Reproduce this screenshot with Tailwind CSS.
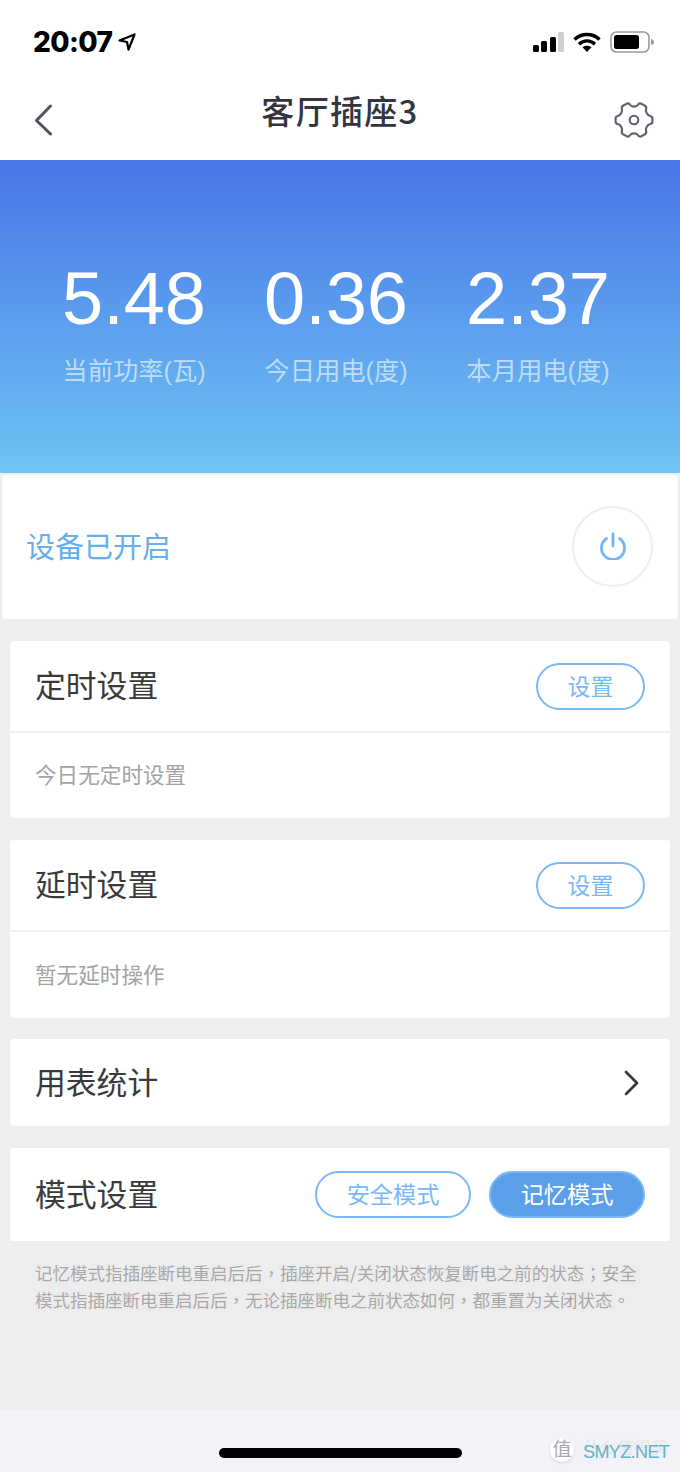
<!doctype html>
<html lang="zh">
<head>
<meta charset="utf-8">
<script src="https://cdn.jsdelivr.net/npm/@tailwindcss/browser@4"></script>
</head>
<body class="m-0">
<div class="relative w-[680px] h-[1472px] overflow-hidden bg-[#eeeeee] flex flex-col font-['Liberation_Sans','Noto_Sans_CJK_SC',sans-serif]">
  <header class="h-[160px] bg-white flex flex-col shrink-0">
    <div class="h-[83px] flex items-center justify-between pl-[33px] pr-[26px]">
      <div class="flex items-center gap-[6px]">
        <span class="font-['Inter',sans-serif] font-extrabold text-[28px] leading-none text-black tracking-[-0.6px]">20:07</span>
        <svg width="18" height="18" viewBox="0 0 18 18" fill="none" stroke="#000" stroke-width="2.2" stroke-linejoin="round"><path d="M1.5 7.5 16.5 1.5 10.5 16.5 9 9Z"/></svg>
      </div>
      <div class="flex items-center gap-[9px]">
        <svg width="31" height="20" viewBox="0 0 31 20"><rect x="0" y="13" width="6" height="7" rx="1.5" fill="#000"/><rect x="8" y="9" width="6" height="11" rx="1.5" fill="#000"/><rect x="17" y="5" width="6" height="15" rx="1.5" fill="#000"/><rect x="25" y="0" width="6" height="20" rx="1.5" fill="#cfcfcf"/></svg>
        <svg width="28" height="20" viewBox="0 0 28 20" fill="none" stroke="#000" stroke-width="3.4"><path d="M1.5 7.5C8.5 .8 19.500 .8 26.500 7.500"/><path d="M6 12.200C10.800 7.800 17.200 7.800 22 12.200"/><path d="M14 20 9.500 15.300C12 13.300 16 13.300 18.500 15.300Z" fill="#000" stroke="none"/></svg>
        <svg width="44" height="22" viewBox="0 0 44 22"><rect x="1" y="1" width="38" height="20" rx="5.500" fill="none" stroke="#9a9a9a" stroke-width="1.600"/><rect x="4" y="4" width="25" height="14" rx="2.500" fill="#000"/><path d="M41 8C43 8.500 44 9.500 44 11 44 12.500 43 13.500 41 14Z" fill="#9a9a9a"/></svg>
      </div>
    </div>
    <div class="relative flex-1 flex items-start justify-between pl-[34px] pr-[26px]">
      <svg width="20" height="32" viewBox="0 0 20 32" fill="none" stroke="#50535f" stroke-width="3" stroke-linecap="round" stroke-linejoin="round" class="mt-[21px]"><path d="M16.500 2 2.500 16.500 16.500 30"/></svg>
      <h1 class="absolute left-0 right-0 top-[4px] text-center text-[33px] leading-[46px] font-medium tracking-[1.300px] text-[#33353f] m-0 font-['Noto_Sans_CJK_SC',sans-serif]">客厅插座3</h1>
      <svg width="40" height="38" viewBox="0 0 42 40" fill="none" stroke="#5f616d" stroke-width="2.300" stroke-linejoin="round" class="mt-[18px]"><path d="M13.500 2.800C15 2.300 16.300 3 17 4.200 18.500 6.500 23.500 6.500 25 4.200 25.700 3 27 2.300 28.500 2.800L32.500 5C33.800 5.800 34.100 7.200 33.700 8.500 32.800 11 35.200 15.300 38 15.800 39.400 16.100 40.400 17.200 40.400 18.500V21.500C40.400 22.800 39.400 23.900 38 24.200 35.200 24.700 32.800 29 33.700 31.500 34.100 32.800 33.800 34.200 32.500 35L28.500 37.200C27 37.700 25.700 37 25 35.800 23.500 33.500 18.500 33.500 17 35.800 16.300 37 15 37.700 13.500 37.200L9.500 35C8.200 34.200 7.900 32.800 8.300 31.500 9.200 29 6.800 24.700 4 24.200 2.600 23.900 1.600 22.800 1.600 21.500V18.500C1.600 17.200 2.600 16.100 4 15.800 6.800 15.300 9.200 11 8.300 8.500 7.900 7.200 8.200 5.800 9.500 5Z"/><circle cx="21" cy="20" r="4.500"/></svg>
    </div>
  </header>

  <section class="h-[313px] shrink-0 bg-gradient-to-b from-[#4a74e6] to-[#70c4f3] grid grid-cols-[202px_202px_202px] pl-[33px] pt-[98px]">
    <div class="flex flex-col items-center"><span class="text-[74px] leading-[82px] text-white">5.48</span><span class="text-[25.300px] leading-[34px] mt-[14px] text-white/60">当前功率(瓦)</span></div>
    <div class="flex flex-col items-center"><span class="text-[74px] leading-[82px] text-white">0.36</span><span class="text-[25.300px] leading-[34px] mt-[14px] text-white/60">今日用电(度)</span></div>
    <div class="flex flex-col items-center"><span class="text-[74px] leading-[82px] text-white">2.37</span><span class="text-[25.300px] leading-[34px] mt-[14px] text-white/60">本月用电(度)</span></div>
  </section>

  <section class="mx-[2px] mt-[2px] h-[144px] shrink-0 bg-white rounded-[4px] flex items-center justify-between pl-[25px] pr-[25px]">
    <span class="text-[29px] pt-[4px] -ml-[1px] text-[#66aeee]">设备已开启</span>
    <div class="w-[81px] h-[81px] mb-[2px] rounded-full border-2 border-[#eeeeee] flex items-center justify-center">
      <svg width="28" height="28" viewBox="0 0 28 28" fill="none" stroke="#72b6f5" stroke-width="2.800" stroke-linecap="round"><path d="M14 2V14"/><path d="M7.500 6.500a11.500 11.500 0 1 0 13 0"/></svg>
    </div>
  </section>

  <main class="mx-[10px] flex flex-col">
    <div class="mt-[22px] h-[177px] bg-white rounded-[4px] flex flex-col">
      <div class="h-[90px] border-b-2 border-[#f0f0f0] box-content flex items-center justify-between pl-[25px] pr-[25px]">
        <span class="text-[30.800px] pt-[2px] text-[#3a3a3a]">定时设置</span>
        <button class="w-[109px] h-[47px] pt-[2px] rounded-full border-2 border-[#7ab9f8] text-[23px] text-[#7ab9f8]">设置</button>
      </div>
      <div class="flex-1 flex items-center pl-[25px] pt-[2px] text-[21.600px] text-[#a3a3a3]">今日无定时设置</div>
    </div>

    <div class="mt-[22px] h-[178px] bg-white rounded-[4px] flex flex-col">
      <div class="h-[90px] border-b-2 border-[#f0f0f0] box-content flex items-center justify-between pl-[25px] pr-[25px]">
        <span class="text-[30.800px] pt-[2px] text-[#3a3a3a]">延时设置</span>
        <button class="w-[109px] h-[47px] pt-[2px] rounded-full border-2 border-[#7ab9f8] text-[23px] text-[#7ab9f8]">设置</button>
      </div>
      <div class="flex-1 flex items-center pl-[25px] pt-[2px] text-[21.600px] text-[#a3a3a3]">暂无延时操作</div>
    </div>

    <div class="mt-[21px] h-[87px] bg-white rounded-[4px] flex items-center justify-between pl-[25px] pr-[31px]">
      <span class="text-[30.800px] pt-[3px] text-[#3a3a3a]">用表统计</span>
      <svg width="16" height="26" viewBox="0 0 16 26" fill="none" stroke="#3a3a3a" stroke-width="2.800" stroke-linecap="round" stroke-linejoin="round"><path d="M3 2 14 13 3 24"/></svg>
    </div>

    <div class="mt-[22px] h-[93px] bg-white rounded-t-[4px] flex items-center justify-between pl-[25px] pr-[25px]">
      <span class="text-[30.800px] pt-[4px] text-[#3a3a3a]">模式设置</span>
      <div class="flex gap-[18px]">
        <button class="w-[156px] h-[47px] pt-[2px] rounded-full border-2 border-[#7ab9f8] text-[23.200px] text-[#7ab9f8]">安全模式</button>
        <button class="w-[156px] h-[47px] pt-[2px] rounded-full border-2 border-[#7ab9f8] bg-[#5c9fe9] text-[23.200px] text-white">记忆模式</button>
      </div>
    </div>

    <div class="mt-[19px] mr-[-4px] h-[83px] bg-[#ededed] rounded-[6px] pl-[25px]">
      <p lang="zh-Hant" class="-mt-[1px] text-[17.500px] leading-[27px] text-[#a8a8a8] font-['Noto_Sans_CJK_TC',sans-serif] whitespace-nowrap">记忆模式指插座断电重启后后，插座开启/关闭状态恢复断电之前的状态；安全<br>模式指插座断电重启后后，无论插座断电之前状态如何，都重置为关闭状态。</p>
    </div>
  </main>

  <footer class="mt-auto h-[62px] shrink-0 bg-[#f2f2f7] flex justify-center pt-[38px]">
    <div class="w-[243px] h-[10px] rounded-full bg-black"></div>
  </footer>

  <div class="absolute left-[550px] top-[1435px] w-[130px] h-[30px]">
    <div class="absolute left-0 top-[3px] w-[24px] h-[24px] rounded-full bg-white text-[#a9a9a9] text-[19px] leading-[24px] text-center shadow-sm">值</div>
    <span class="absolute left-[33px] top-[2px] text-[17px] leading-[24px] text-[#e6e6ea] whitespace-nowrap">什么值得买</span>
    <span class="absolute left-[33px] top-[5px] text-[18px] tracking-[-0.6px] leading-[24px] text-[#62b4c8] whitespace-nowrap">SMYZ.NET</span>
  </div>
</div>
</body>
</html>
